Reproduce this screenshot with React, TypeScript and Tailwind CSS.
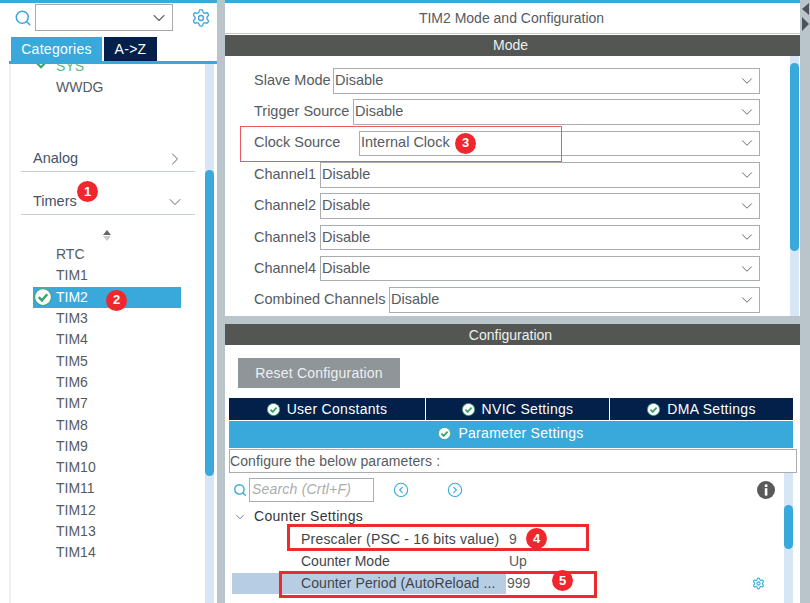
import { ChevronDown, ChevronRight, CircleChevronLeft, CircleChevronRight, Search, Settings } from 'lucide-react';

const modeRows = [
    { label: 'Slave Mode', value: 'Disable', left: 'w-[79px]' },
    { label: 'Trigger Source', value: 'Disable', left: 'w-[99px]' },
    { label: 'Clock Source', value: 'Internal Clock', left: 'w-[105px]', gap: 'mb-[6px]' },
    { label: 'Channel1', value: 'Disable', left: 'w-[66px]' },
    { label: 'Channel2', value: 'Disable', left: 'w-[66px]' },
    { label: 'Channel3', value: 'Disable', left: 'w-[66px]' },
    { label: 'Channel4', value: 'Disable', left: 'w-[66px]' },
    { label: 'Combined Channels', value: 'Disable', left: 'w-[135px]' },
];

const timers = ['TIM3', 'TIM4', 'TIM5', 'TIM6', 'TIM7', 'TIM8', 'TIM9', 'TIM10', 'TIM11', 'TIM12', 'TIM13', 'TIM14'];

function Badge({ n, className }: { n: number; className: string }) {
    return (
        <span className={`absolute flex h-[21px] w-[21px] items-center justify-center rounded-full bg-[#f0282e] text-[13px] font-bold text-white ${className}`}>
            {n}
        </span>
    );
}

function Check({ className }: { className: string }) {
    return (
        <svg viewBox="0 0 16 16" className={className}>
            <circle cx="8" cy="8" r="7.5" fill="#ffffff" stroke="#3ba56f" strokeWidth="1" />
            <path d="M4.2 8.2 L7 11 L11.8 5.6" fill="none" stroke="#3ba56f" strokeWidth="2.2" />
        </svg>
    );
}

function TabLabel({ label }: { label: string }) {
    return (
        <span className="flex items-center justify-center gap-[7px]">
            <Check className="h-[13px] w-[13px]" />
            {label}
        </span>
    );
}

function Scrollbar({ thumb, className }: { thumb: string; className: string }) {
    return (
        <div className={`flex shrink-0 flex-col bg-[#d6e6f4] ${className}`}>
            <div className={`rounded-full bg-[#39a9dc] ${thumb}`} />
        </div>
    );
}

export default function App() {
    return (
        <div className="flex h-[603px] w-[810px] overflow-hidden bg-[#b9c5cb] font-['Liberation_Sans',Arial,sans-serif] text-[14px] text-[#555b62]">
            {/* left tree */}
            <div className="flex h-full w-[217px] shrink-0 flex-col bg-white">
                <div className="h-[3px] bg-[#39a9dc]" />
                <div className="flex h-[29px] items-center pl-[14px]">
                    <Search size={18} strokeWidth={2} className="mr-[3px] text-[#39a9dc]" />
                    <div className="flex h-[27px] w-[138px] items-center justify-end border border-[#a9a9a9] pr-[3px]">
                        <ChevronDown size={20} strokeWidth={1.3} className="text-[#666]" />
                    </div>
                    <Settings size={20} strokeWidth={1.6} className="ml-[18px] text-[#39a9dc]" />
                </div>
                <div className="mt-[5px] flex h-[24px] pl-[11px] tracking-[0.3px] text-white">
                    <div className="flex w-[91px] items-center justify-center bg-[#39a9dc]">Categories</div>
                    <div className="ml-[2px] flex w-[53px] items-center justify-center bg-[#022049]">A-&gt;Z</div>
                </div>
                <div className="ml-[9px] h-[3px] bg-[#39a9dc]" />
                <div className="flex min-h-0 flex-1 overflow-hidden">
                    <div className="ml-[9px] flex-1 overflow-hidden border-l-2 border-[#eef0f2]">
                        <div className="relative flex h-[5px] overflow-visible pl-[24px] text-[#5ab97f]">
                            <svg viewBox="0 0 12 8" className="absolute left-[24px] top-[-2px] h-[7px] w-[12px]">
                                <path d="M1 1 L6 6 L11 1" fill="none" stroke="#3ba56f" strokeWidth="2.4" />
                            </svg>
                            <span className="ml-[21px] mt-[-6px] leading-[16px]">SYS</span>
                        </div>
                        <div className="pl-[45px] pt-[10px] leading-[16px]">WWDG</div>
                        <div className="mx-[10px] mt-[53px] flex h-[24px] items-center justify-between border-b border-[#c5ced6] pb-[2px] pl-[12px] pr-[10px] text-[#45526c]">
                            <span className="text-[14.5px]">Analog</span>
                            <ChevronRight size={20} strokeWidth={1.2} className="text-[#666]" />
                        </div>
                        <div className="relative mx-[10px] mt-[19px] flex h-[24px] items-center justify-between border-b border-[#c5ced6] pb-[2px] pl-[12px] pr-[10px] text-[#45526c]">
                            <span className="text-[14.5px]">Timers</span>
                            <ChevronDown size={20} strokeWidth={1.2} className="text-[#666]" />
                            <Badge n={1} className="left-[56px] top-[-10px]" />
                        </div>
                        <div className="flex h-[28px] flex-col items-center justify-center gap-[1px] pr-[3px] pt-[12px]">
                            <div className="h-0 w-0 border-x-[4px] border-b-[5px] border-x-transparent border-b-[#666]" />
                            <div className="h-0 w-0 border-x-[4px] border-t-[5px] border-x-transparent border-t-[#c9c9c9]" />
                        </div>
                        <div className="pt-[1px]">
                            <div className="flex h-[21.3px] items-center pl-[45px]">RTC</div>
                            <div className="flex h-[21.3px] items-center pl-[45px]">TIM1</div>
                            <div className="relative ml-[22px] flex h-[21.3px] w-[148px] items-center bg-[#39a9dc] pl-[1px] text-white">
                                <Check className="h-[18px] w-[18px]" />
                                <span className="ml-[4px]">TIM2</span>
                                <Badge n={2} className="left-[73px] top-[3px]" />
                            </div>
                            {timers.map(name => (
                                <div key={name} className="flex h-[21.3px] items-center pl-[45px]">{name}</div>
                            ))}
                        </div>
                    </div>
                    <Scrollbar thumb="mt-[106px] h-[306px]" className="mr-[3px] w-[9px]" />
                </div>
            </div>

            {/* right side */}
            <div className="ml-[8px] flex h-full w-[575px] shrink-0 flex-col">
                <div className="flex h-[316px] flex-col bg-white">
                    <div className="h-[3px] bg-[#39a9dc]" />
                    <div className="flex h-[31px] items-center justify-center border-b border-[#c8c8c8] pr-[2px]">TIM2 Mode and Configuration</div>
                    <div className="mt-[1px] flex h-[21px] items-center justify-center bg-[#545654] pr-[4px] text-[#eef0ee]">Mode</div>
                    <div className="flex min-h-0 flex-1">
                        <div className="relative flex-1 pl-[29px] pr-[30px] pt-[12px] text-[14.5px]">
                            {modeRows.map(row => (
                                <div key={row.label} className={`flex h-[25.5px] items-center ${row.gap ?? 'mb-[5.8px]'}`}>
                                    <span className={`${row.left} shrink-0 whitespace-nowrap`}>{row.label}</span>
                                    <div className={`flex h-full min-w-0 flex-1 items-center justify-between border border-[#a9adb0] pl-[1px] pr-[3px] ${row.label === 'Clock Source' ? 'relative' : ''}`}>
                                        <span>{row.value}</span>
                                        <ChevronDown size={18} strokeWidth={1.3} className="text-[#666]" />
                                        {row.label === 'Clock Source' && <Badge n={3} className="left-[95px] top-[1px]" />}
                                    </div>
                                </div>
                            ))}
                            <div className="absolute left-[15px] top-[70px] h-[36px] w-[322px] border border-[#ec5a5f]" />
                        </div>
                        <Scrollbar thumb="mt-[7px] h-[188px]" className="mr-[1px] w-[9px]" />
                    </div>
                </div>

                <div className="mt-[8px] flex min-h-0 flex-1 flex-col bg-white">
                    <div className="flex h-[21px] items-center justify-center bg-[#545654] pr-[4px] pt-[1px] text-[#eef0ee]">Configuration</div>
                    <div className="px-[4px]">
                        <div className="ml-[9px] mt-[13px] flex h-[30px] w-[162px] items-center justify-center bg-[#8f9599] tracking-[0.2px] text-[#eef0f0]">Reset Configuration</div>
                        <div className="mt-[10px] grid h-[22px] w-[564px] grid-cols-[196px_184px_184px] text-white tracking-[0.3px]">
                            <div className="flex items-center justify-center bg-[#022049]"><TabLabel label="User Constants" /></div>
                            <div className="flex items-center justify-center border-l-[1px] border-white bg-[#022049]"><TabLabel label="NVIC Settings" /></div>
                            <div className="flex items-center justify-center border-l-[1px] border-white bg-[#022049]"><TabLabel label="DMA Settings" /></div>
                        </div>
                        <div className="mt-[1px] flex h-[27px] w-[564px] items-center justify-center border-b-[3px] border-[#39a9dc] bg-[#39a9dc] tracking-[0.3px] text-white">
                            <TabLabel label="Parameter Settings" />
                        </div>
                        <div className="mt-[1px] flex h-[24px] w-[568px] items-center border border-[#a9adb0] tracking-[0.1px]">Configure the below parameters :</div>
                    </div>
                    <div className="relative flex min-h-0 flex-1">
                        <div className="min-w-0 flex-1">
                            <div className="flex h-[28px] items-center pt-[5px] pl-[8px]">
                                <Search size={14} strokeWidth={2.4} className="text-[#39a9dc]" />
                                <div className="ml-[2px] flex h-[24px] w-[125px] items-center border border-[#a9adb0] pl-[2px] italic tracking-[0.2px] text-[#a9adb0]">Search (Crtl+F)</div>
                                <CircleChevronLeft size={16} strokeWidth={1.6} className="ml-[19px] text-[#39a9dc]" />
                                <CircleChevronRight size={16} strokeWidth={1.6} className="ml-[38px] text-[#39a9dc]" />
                                <svg viewBox="0 0 18 18" className="ml-[294px] h-[18px] w-[18px]">
                                    <circle cx="9" cy="9" r="9" fill="#5a5a5a" />
                                    <rect x="7.8" y="3.4" width="2.6" height="2.6" fill="#ffffff" />
                                    <rect x="7.8" y="7.2" width="2.6" height="7.4" fill="#ffffff" />
                                </svg>
                            </div>
                            <div className="mt-[6px] flex h-[19px] items-center pl-[8px] tracking-[0.3px] text-[#33383c]">
                                <ChevronDown size={14} strokeWidth={1.4} className="text-[#666]" />
                                <span className="ml-[7px]">Counter Settings</span>
                            </div>
                            <div className="mt-[1px] flex h-[24px] items-center pl-[76px] text-[#3f454a]">
                                <span className="w-[208px] whitespace-nowrap tracking-[0.2px]">Prescaler (PSC - 16 bits value)</span>
                                <span className="text-[#555b62]">9</span>
                            </div>
                            <div className="flex h-[21px] items-center pl-[76px] text-[#3f454a]">
                                <span className="w-[208px]">Counter Mode</span>
                                <span className="text-[#555b62]">Up</span>
                            </div>
                            <div className="mt-[1px] flex h-[21px] items-center pl-[7px] text-[#3f454a]">
                                <span className="flex h-full w-[274px] items-center whitespace-nowrap bg-[#b7cde3] pl-[69px] tracking-[0.1px]">Counter Period (AutoReload ...</span>
                                <span className="ml-[1px] text-[#555b62]">999</span>
                                <Settings size={13} strokeWidth={2} className="ml-[222px] text-[#39a9dc]" />
                            </div>
                        </div>
                        <Scrollbar thumb="mt-[32px] h-[44px]" className="mr-[7px] w-[9px]" />
                        <div className="absolute left-[62px] top-[51px] h-[27px] w-[302px] border-[3px] border-[#ee2a30]" />
                        <div className="absolute left-[54px] top-[98px] h-[27px] w-[318px] border-[3px] border-[#ee2a30]" />
                        <Badge n={4} className="left-[301px] top-[55px]" />
                        <Badge n={5} className="left-[327px] top-[97px]" />
                    </div>
                </div>
            </div>

            {/* collapse arrows */}
            <div className="flex w-[10px] flex-col items-center gap-[2px] pl-[1px] pt-[3px]">
                <div className="h-0 w-0 border-y-[6px] border-r-[7px] border-y-transparent border-r-[#4d5358]" />
                <div className="h-0 w-0 border-y-[7px] border-l-[7px] border-y-transparent border-l-[#4d5358]" />
            </div>
        </div>
    );
}
